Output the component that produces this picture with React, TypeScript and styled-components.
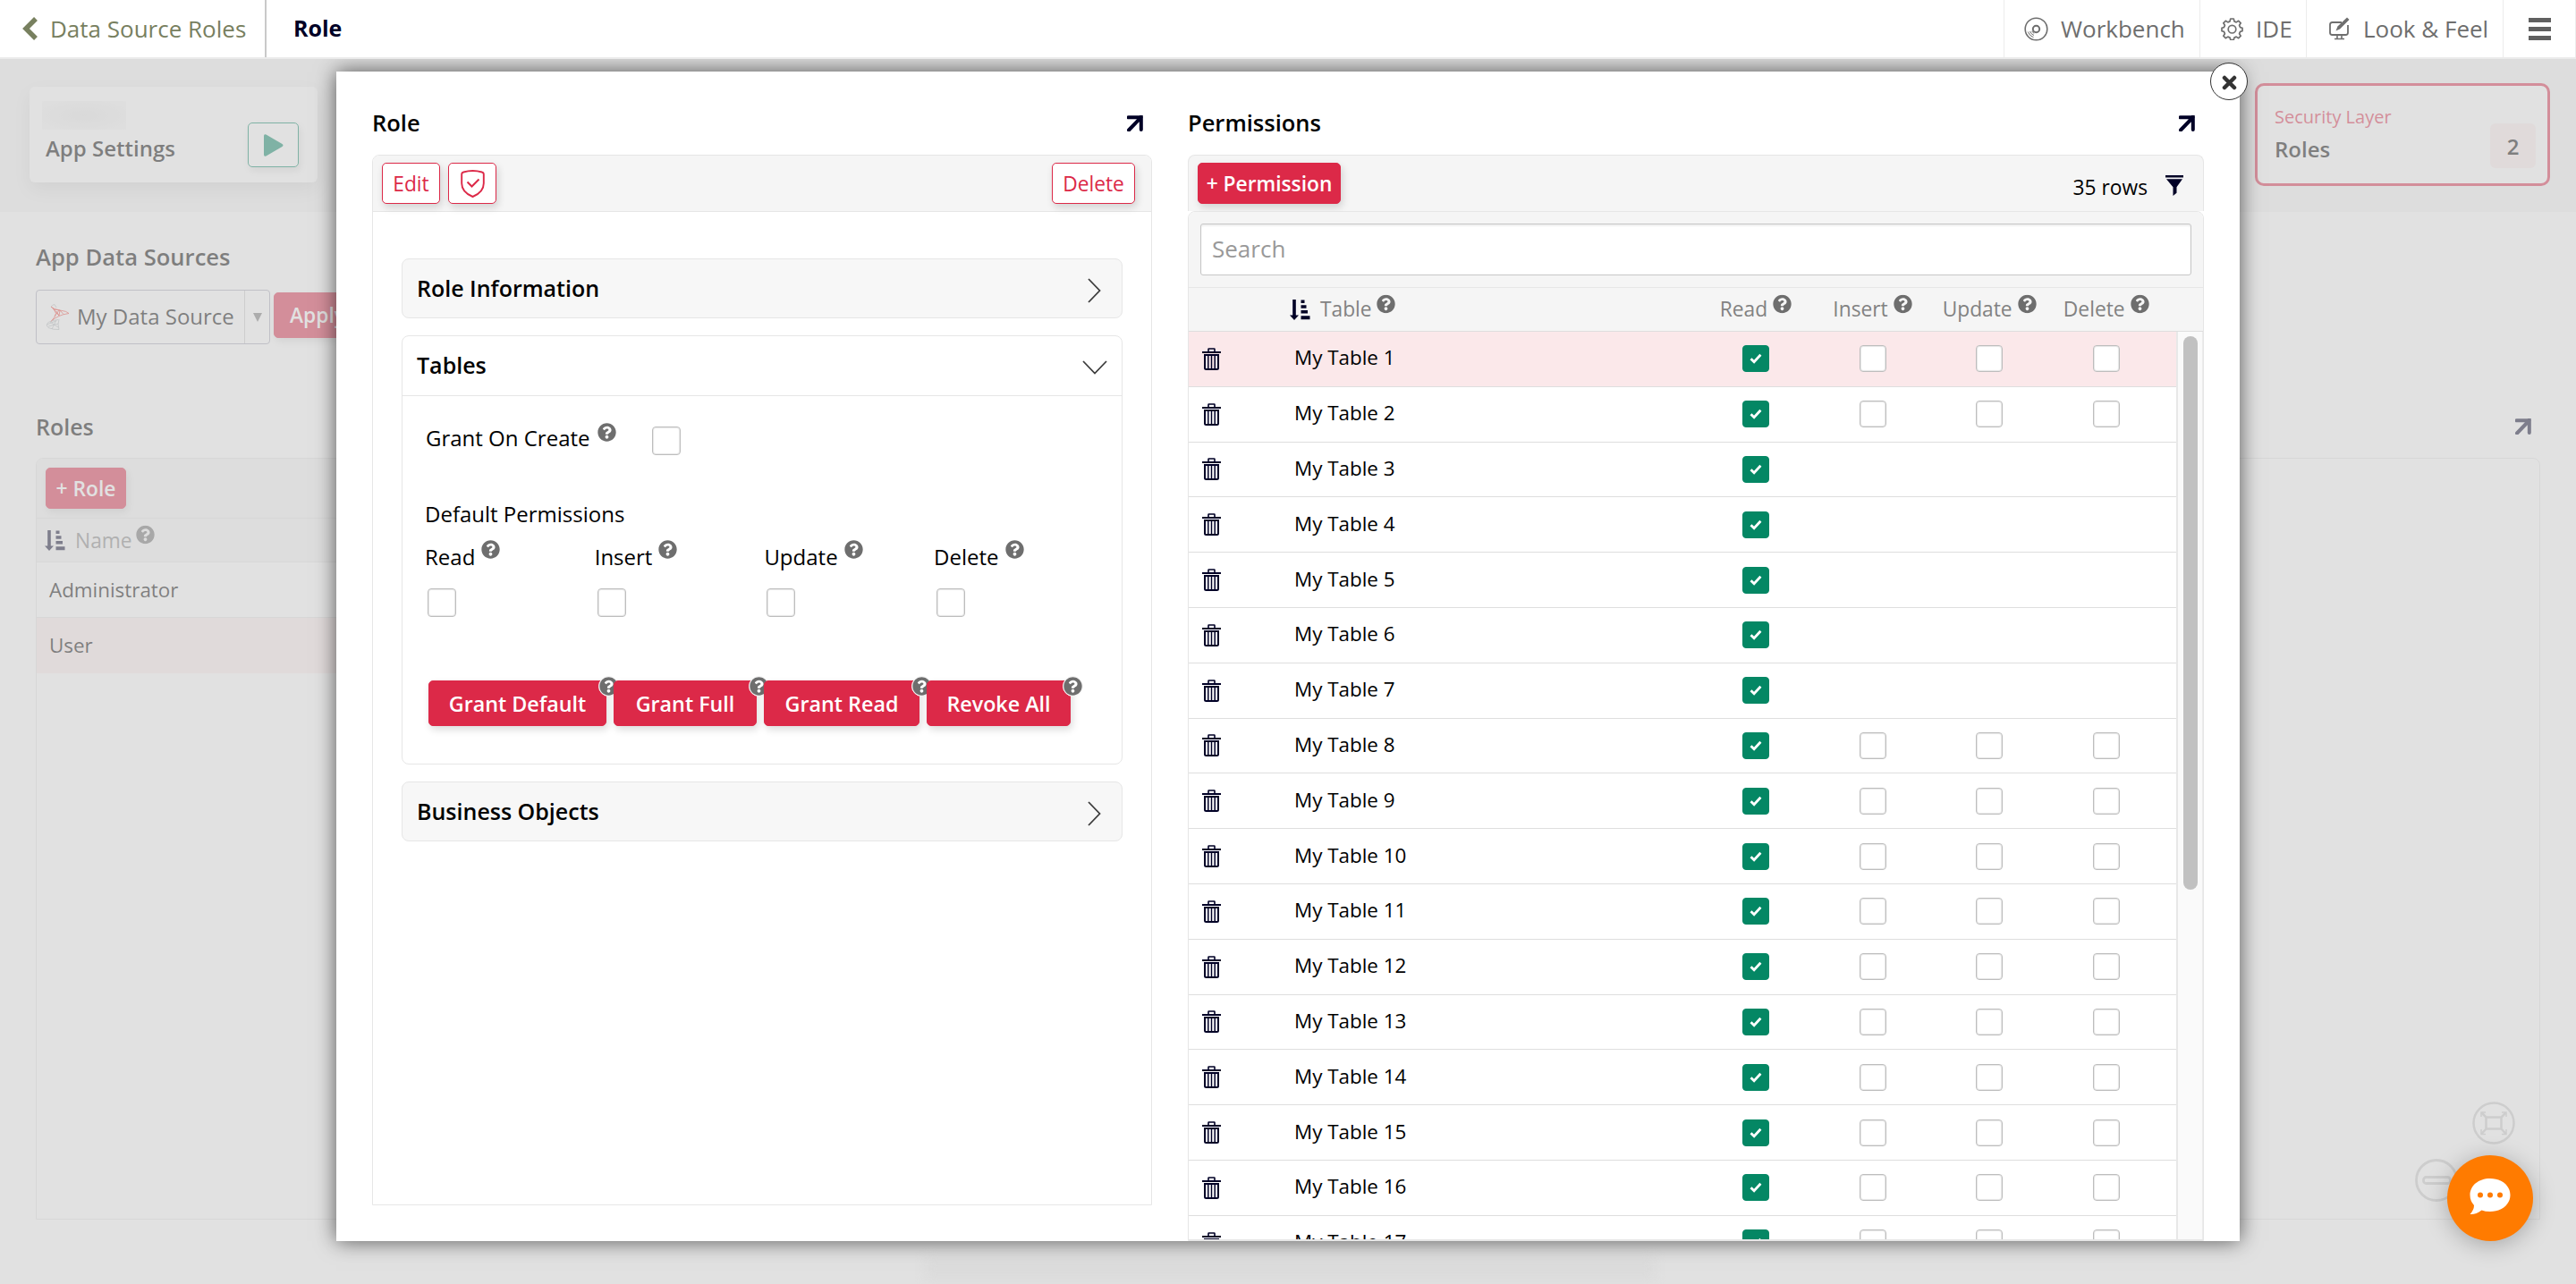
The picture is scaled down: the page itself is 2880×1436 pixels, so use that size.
import { ReactNode } from 'react';
import styled, { createGlobalStyle, css } from 'styled-components';
import { FaQuestionCircle } from 'react-icons/fa';

const colors = {
  primary: '#dc2948',
  green: '#048764',
  navy: '#000026',
  border: '#e6e6e6',
  toolbar: '#f5f5f5',
  selected: '#fbe8ea',
  muted: '#6e6e6e',
  columnLabel: '#828282',
};

const GlobalStyle = createGlobalStyle`
  * { box-sizing: border-box; }
  body {
    margin: 0;
    background: #fff;
    color: #000;
    font-family: 'Open Sans', 'Noto Sans', sans-serif;
    font-size: 24px;
  }
  svg { display: block; flex: none; }
`;

const Page = styled.div`
  position: relative;
  display: flex;
  flex-direction: column;
  width: 2880px;
  height: 1436px;
  overflow: hidden;
`;

/* Top bar */

const TopBar = styled.header`
  position: relative;
  z-index: 3;
  display: flex;
  flex: none;
  height: 66px;
  background: #fff;
  border-bottom: 2px solid #ebebeb;
  font-size: 26px;
`;

const BackLink = styled.a`
  display: flex;
  align-items: center;
  gap: 13px;
  width: 298px;
  padding-left: 24px;
  color: #78805f;
  border-right: 2px solid #c9c9c9;
`;

const PageTitle = styled.h1`
  flex: 1;
  margin: 0;
  padding-left: 30px;
  font-size: 25px;
  line-height: 63px;
  font-weight: 700;
  color: ${colors.navy};
`;

const NavItem = styled.a<{ $width: number; $gap?: number; $indent?: number }>`
  display: flex;
  align-items: center;
  gap: ${({ $gap = 12 }) => $gap}px;
  width: ${({ $width }) => $width}px;
  padding-left: ${({ $indent = 23 }) => $indent}px;
  color: ${colors.muted};
  border-left: 1px solid #ececec;
  white-space: nowrap;
`;

const MenuButton = styled.div`
  display: flex;
  flex-direction: column;
  justify-content: center;
  gap: 5px;
  width: 82px;
  padding-left: 28px;
  border-left: 1px solid #ececec;
  border-right: 1px solid #ececec;
`;

const MenuBar = styled.span`
  width: 25px;
  height: 5px;
  background: #606060;
`;

/* Shared controls */

const Button = styled.button<{ $outline?: boolean; $height?: number; $width?: number }>`
  display: flex;
  align-items: center;
  justify-content: center;
  flex: none;
  height: ${({ $height = 46 }) => $height}px;
  width: ${({ $width }) => ($width ? `${$width}px` : 'auto')};
  padding: 0;
  border: 1px solid ${colors.primary};
  border-radius: 5px;
  background: ${colors.primary};
  color: #fff;
  font: 600 22.75px 'Open Sans', 'Noto Sans', sans-serif;
  white-space: nowrap;
  box-shadow: 2px 4px 8px rgba(0, 0, 0, 0.14);
  ${({ $outline }) =>
    $outline &&
    css`
      background: #fff;
      color: ${colors.primary};
      font-weight: 500;
    `}
`;

const Box = styled.span<{ $size?: number; $checked?: boolean }>`
  display: flex;
  align-items: center;
  justify-content: center;
  flex: none;
  width: ${({ $size = 30 }) => $size}px;
  height: ${({ $size = 30 }) => $size}px;
  border: 1px solid ${({ $checked }) => ($checked ? colors.green : '#bdbdbd')};
  border-radius: 4px;
  background: ${({ $checked }) => ($checked ? colors.green : '#fff')};
  box-shadow: ${({ $checked }) => ($checked ? 'none' : 'inset 0 0 1px 1px #e6e6e6')};
`;

const HelpMark = styled.span<{ $lift: number }>`
  display: block;
  flex: none;
  transform: translateY(-${({ $lift }) => $lift}px);
  color: #6e6e6e;
`;

const Label = styled.span<{ $muted?: boolean; $small?: boolean; $gap?: number }>`
  display: flex;
  align-items: center;
  gap: ${({ $gap = 7 }) => $gap}px;
  line-height: 32px;
  font-size: ${({ $small }) => ($small ? 22.75 : 24)}px;
  color: ${({ $muted }) => ($muted ? colors.columnLabel : 'inherit')};
  white-space: nowrap;
`;

const Panel = styled.section<{ $height?: number }>`
  display: flex;
  flex-direction: column;
  height: ${({ $height }) => ($height ? `${$height}px` : 'auto')};
  border: 1px solid ${colors.border};
  border-radius: 8px 8px 0 0;
`;

const Toolbar = styled.div<{ $height?: number }>`
  display: flex;
  align-items: center;
  flex: none;
  gap: 9px;
  height: ${({ $height = 63 }) => $height}px;
  padding: 0 18px 0 10px;
  background: ${colors.toolbar};
  border-bottom: 1px solid ${colors.border};
  border-radius: 7px 7px 0 0;
`;

const Spacer = styled.span`
  flex: 1;
`;

/* Page behind the dialog */

const Background = styled.main`
  flex: 1;
  display: flex;
  flex-direction: column;
`;

const CardBand = styled.div`
  display: flex;
  justify-content: space-between;
  flex: none;
  height: 171px;
  padding: 27px 29px 0 33px;
  background: ${colors.toolbar};
`;

const Card = styled.div<{ $active?: boolean }>`
  display: flex;
  align-items: flex-end;
  justify-content: space-between;
  width: 322px;
  height: 107px;
  margin-top: 4px;
  padding: 0 21px 17px 18px;
  border-radius: 6px;
  background: #fff;
  box-shadow: 0 8px 20px rgba(0, 0, 0, 0.12);
  ${({ $active }) =>
    $active &&
    css`
      width: 330px;
      height: 115px;
      margin-top: 0;
      padding: 0 13px 17px 19px;
      border: 3px solid ${colors.primary};
      border-radius: 10px;
      box-shadow: none;
    `}
`;

const CardText = styled.div`
  display: flex;
  flex-direction: column;
  gap: 5px;
  margin-bottom: 5px;
`;

const CardKicker = styled.span`
  font-size: 20px;
  line-height: 30px;
  color: ${colors.primary};
`;

const BlurredName = styled.span`
  width: 94px;
  height: 32px;
  margin-left: -4px;
  background: radial-gradient(ellipse at center, #ebebeb, #f9f9f9);
`;

const CardName = styled.span`
  font-size: 24px;
  line-height: 32px;
  font-weight: 600;
`;

const PlayButton = styled.span`
  display: flex;
  align-items: center;
  justify-content: center;
  width: 57px;
  height: 50px;
  border: 1px solid ${colors.green};
  border-radius: 5px;
  box-shadow: 2px 4px 8px rgba(0, 0, 0, 0.14);
`;

const CountBadge = styled.span`
  display: flex;
  align-items: center;
  justify-content: center;
  width: 51px;
  height: 50px;
  border-radius: 6px;
  background: #fbecec;
  font-weight: 600;
`;

const Workspace = styled.div`
  display: flex;
  flex-direction: column;
  padding: 35px 40px 0;
`;

const SectionTitle = styled.h2<{ $size?: number }>`
  margin: 0;
  font-size: ${({ $size = 25 }) => $size}px;
  line-height: 32px;
  font-weight: 600;
`;

const SourceRow = styled.div`
  display: flex;
  align-items: center;
  gap: 4px;
  height: 61px;
  margin: 20px 0 76px;

  & > button {
    margin-bottom: 4px;
  }
`;

const Select = styled.div`
  display: flex;
  align-items: center;
  width: 262px;
  height: 61px;
  padding-left: 10px;
  border: 1px solid #aab;
  border-radius: 4px;
  background: #fff;
`;

const SelectText = styled.span`
  flex: 1;
  padding: 0 0 2px 8px;
  white-space: nowrap;
`;

const SelectArrow = styled.span`
  display: flex;
  align-items: center;
  justify-content: center;
  width: 28px;
  height: 100%;
  border-left: 1px solid #ccc;
`;

const RolesHead = styled.div`
  display: flex;
  align-items: center;
  justify-content: space-between;
  padding-right: 10px;
  margin-bottom: 19px;
`;

const RolesPanels = styled.div`
  display: grid;
  grid-template-columns: 1020px 1fr;
  gap: 40px;
  height: 852px;
`;

const RoleRow = styled.div<{ $selected?: boolean }>`
  height: 62px;
  padding-left: 14px;
  line-height: 61px;
  font-size: 22.4px;
  background: ${({ $selected }) => ($selected ? '#fbecec' : '#fff')};
  border-bottom: 1px solid ${({ $selected }) => ($selected ? 'transparent' : colors.border)};
`;

const Backdrop = styled.div`
  position: absolute;
  inset: 66px 0 0;
  z-index: 1;
  background: rgba(206, 206, 206, 0.61);
`;

const FooterSmudge = styled.div`
  position: absolute;
  left: 1035px;
  top: 1406px;
  width: 815px;
  height: 26px;
  background: #dbdbdb;
  filter: blur(6px);
  z-index: 1;
`;

const CanvasTool = styled.div<{ $left: number; $top: number }>`
  position: absolute;
  left: ${({ $left }) => $left}px;
  top: ${({ $top }) => $top}px;
  z-index: 1;
`;

const ChatButton = styled.div`
  position: absolute;
  right: 48px;
  bottom: 48px;
  z-index: 4;
  display: flex;
  align-items: center;
  justify-content: center;
  width: 96px;
  height: 96px;
  padding-bottom: 4px;
  border-radius: 50%;
  background: #ff7b00;
  box-shadow: 0 4px 26px rgba(0, 0, 0, 0.26);
`;

/* Dialog */

const Modal = styled.div`
  position: absolute;
  left: 376px;
  top: 80px;
  z-index: 2;
  display: grid;
  grid-template-columns: 872px 1136px;
  gap: 40px;
  width: 2128px;
  height: 1308px;
  padding: 0 40px;
  background: #fff;
  box-shadow: 0 0 22px rgba(0, 0, 0, 0.62);
`;

const CloseButton = styled.button`
  position: absolute;
  right: -9px;
  top: -10px;
  display: flex;
  align-items: center;
  justify-content: center;
  width: 42px;
  height: 42px;
  padding: 2px 0 0;
  border: 1.5px solid #333;
  border-radius: 50%;
  background: #fff;
`;

const Column = styled.div`
  display: flex;
  flex-direction: column;
  height: 1308px;
  overflow: hidden;
`;

const ColumnHead = styled.div`
  display: flex;
  align-items: center;
  justify-content: space-between;
  flex: none;
  height: 93px;
  padding: 21px 10px 0 0;

  & > svg {
    margin-top: 2px;
  }
`;

const Accordions = styled.div`
  display: flex;
  flex-direction: column;
  gap: 19px;
  padding: 52px 32px 0;
`;

const Accordion = styled.div<{ $open?: boolean }>`
  border: 1px solid ${colors.border};
  border-radius: 8px;
  background: ${({ $open }) => ($open ? '#fff' : '#f7f7f7')};
  height: ${({ $open }) => ($open ? '480px' : '67px')};
`;

const AccordionHead = styled.div<{ $open?: boolean }>`
  display: flex;
  align-items: center;
  justify-content: space-between;
  height: ${({ $open }) => ($open ? 67 : 65)}px;
  padding: 0 ${({ $open }) => ($open ? 16 : 23)}px 2px 16px;
  border-bottom: ${({ $open }) => ($open ? `1px solid ${colors.border}` : 'none')};

  & > svg {
    margin-top: 6px;
  }
`;

const AccordionBody = styled.div`
  padding: 34px 24px 0 25px;
`;

const GrantRow = styled.div`
  display: flex;
  align-items: flex-start;
  gap: 40px;
  height: 32px;
  margin-bottom: 50px;

  & > ${Label} {
    margin: -3px 0 0 1px;
  }
`;

const DefaultGrid = styled.div`
  display: grid;
  grid-template-columns: repeat(4, 189.7px);
  row-gap: 19px;
  margin: 16px 0 71px;

  & > ${Box} {
    margin-left: 3px;
  }
`;

const GrantButtons = styled.div`
  display: flex;
  gap: 8px;
  padding-left: 4px;
`;

const GrantButton = styled(Button)`
  position: relative;
  font-size: 23.3px;
`;

const CornerHelp = styled.span`
  position: absolute;
  right: -15px;
  top: -6px;
  border: 1px solid #f3f3f3;
  border-radius: 50%;
  background: #fff;
  color: #6e6e6e;
`;

const RowCount = styled.span`
  padding-top: 8px;
  margin-right: 8px;
  font-size: 22.75px;
`;

const SearchBar = styled.div`
  flex: none;
  height: 85px;
  padding: 13px;
  background: ${colors.toolbar};
  border-bottom: 1px solid ${colors.border};
  border-radius: 7px 7px 0 0;
`;

const SearchInput = styled.input`
  width: 100%;
  height: 58px;
  padding: 0 12px 2px;
  border: 1px solid #c6c6c6;
  border-radius: 3px;
  box-shadow: inset 0 2px 2px #efefef;
  font: 26px 'Open Sans', 'Noto Sans', sans-serif;
  &::placeholder { color: #999; opacity: 1; }
`;

const rowColumns = css`
  display: grid;
  grid-template-columns: 116px 1fr repeat(4, 130.6px);
  align-items: center;
`;

const GridHead = styled.div`
  ${rowColumns}
  flex: none;
  height: 49px;
  padding-right: 43px;
  background: ${colors.toolbar};
  border-bottom: 1px solid #dedede;
`;

const GridBody = styled.div`
  display: flex;
  flex: 1;
  overflow: hidden;
  border-bottom: 1px solid ${colors.border};
`;

const Rows = styled.div`
  width: 1104px;
`;

const Row = styled.div<{ $selected?: boolean }>`
  ${rowColumns}
  height: 61.8px;
  padding-right: 13px;
  background: ${({ $selected }) => ($selected ? colors.selected : '#fff')};
  border-bottom: 1px solid #dedede;
`;

const Cell = styled.span<{ $center?: boolean }>`
  display: flex;
  align-items: center;
  gap: 11px;
  justify-content: ${({ $center }) => ($center ? 'center' : 'flex-start')};
`;

const TrashCell = styled(Cell)`
  padding-left: 15px;
`;

const SortCell = styled(Cell)`
  margin-left: -3px;
`;

const TableName = styled.span`
  padding: 0 0 3px 2px;
  font-size: 22.4px;
`;

const ScrollTrack = styled.div`
  width: 30px;
  padding: 5px 0 0 6px;
  background: #fafafa;
  border-left: 2px solid #e8e8e8;
  border-right: 1px solid #ececec;
`;

const ScrollThumb = styled.div`
  width: 16px;
  height: 619px;
  border-radius: 8px;
  background: #c1c1c1;
`;

const TableToolbar = styled(Toolbar)`
  gap: 12px;
  border: 1px solid ${colors.border};
  border-bottom: none;
  border-radius: 8px 8px 0 0;
  padding-right: 22px;

  & > svg {
    margin-top: 4px;
  }
`;

const TablePanel = styled(Panel)`
  flex: 1;
  min-height: 0;
`;

const NameHead = styled(Toolbar)`
  gap: 11px;
  padding: 1px 0 0 9px;
  border-radius: 0;
`;

/* Icons */

const ExpandIcon = () => (
  <svg width="18" height="18" viewBox="0 0 18 18" fill="none" stroke={colors.navy} strokeWidth="4">
    <path d="M1.5 2.2H16M15.8 1v15M15 3 2 16.5" strokeLinecap="round" />
    <path d="M10 2.5h6v6z" fill={colors.navy} stroke="none" />
  </svg>
);

const SortIcon = () => (
  <svg width="23" height="23" viewBox="0 0 23 23" fill={colors.navy}>
    <path d="M3.200 0h3.600v17.500h3.200l-5 5.500-5-5.500h3.200zM12.500 .5h4v3.500h-4zM12.500 6.200h6v3.600h-6zM12.500 12h7.500v3.600h-7.500zM12.500 18.200h10v4h-10z" />
  </svg>
);

const TrashIcon = () => (
  <svg width="21" height="25" viewBox="0 0 21 25" fill="none" stroke={colors.navy}>
    <path d="M0 5h21" strokeWidth="2" />
    <path d="M7 4V1.500q0-.5.500-.5h6q.5 0 .5.500V4" strokeWidth="1.600" />
    <path d="M3 8h15v14.500q0 1.500-1.500 1.500h-12Q3 24 3 22.500z" strokeWidth="2" />
    <path d="M6.800 9v14M10.500 9v14M14.200 9v14" strokeWidth="1.500" />
  </svg>
);

const FilterIcon = () => (
  <svg width="20" height="23" viewBox="0 0 20 23" fill={colors.navy}>
    <path d="M0 0h20v2.400H0zM1 4.200h18l-6.500 9v6.500L8.500 23v-9.800z" />
  </svg>
);

const ShieldIcon = () => (
  <svg width="27" height="31" viewBox="0 0 27 31" fill="none" stroke={colors.primary} strokeWidth="1.900">
    <path
      d="M1.200 5Q1.200 3 3.200 2.500 13.500-.5 23.800 2.500q2 .5 2 2.500v10q0 10-12.300 15Q1.200 25 1.200 15z"
      strokeLinejoin="round"
    />
    <path d="m7.500 13.500 5 5 8-8" strokeWidth="2" />
  </svg>
);

const CheckIcon = () => (
  <svg width="14" height="12" viewBox="0 0 14 12" fill="none" stroke="#fff" strokeWidth="2.800">
    <path d="m1.500 6.200 3.600 3.600L12.400 1.800" />
  </svg>
);

const Chevron = ({ down }: { down?: boolean }) =>
  down ? (
    <svg width="28" height="16" viewBox="0 0 28 16" fill="none" stroke="#3c3c3c" strokeWidth="1.800">
      <path d="m1 1 13 13.500L27 1" />
    </svg>
  ) : (
    <svg width="15" height="28" viewBox="0 0 15 28" fill="none" stroke="#3c3c3c" strokeWidth="1.800">
      <path d="m1 1 12.500 13L1 27" />
    </svg>
  );

const BackIcon = () => (
  <svg width="19" height="26" viewBox="0 0 19 26" fill="none" stroke="#78805f" strokeWidth="5.500">
    <path d="M16 2 5 13l11 11" />
  </svg>
);

const DiscIcon = () => (
  <svg width="27" height="27" viewBox="0 0 27 27" fill="none" stroke={colors.muted} strokeWidth="1.600">
    <circle cx="13.500" cy="13.500" r="12.300" />
    <circle cx="13.500" cy="13.500" r="3.700" strokeWidth="2" />
    <path
      d="M4.300 16.500a9.700 9.700 0 0 0 6.200 6.200M6.500 16a7.400 7.400 0 0 0 4.500 4.500M8.700 15.800a5.300 5.300 0 0 0 2.500 2.500"
      strokeWidth="1"
    />
  </svg>
);

const GearIcon = () => (
  <svg width="25" height="25" viewBox="0 0 25 25" fill="none" stroke={colors.muted} strokeWidth="1.700">
    <path
      d="M10.700 1h3.600l.6 2.900 2.300 1 2.500-1.600 2.500 2.500-1.600 2.500 1 2.300 2.400.6v3.600l-2.400.6-1 2.300 1.600 2.500-2.500 2.500-2.500-1.600-2.300 1-.6 2.400h-3.600l-.6-2.400-2.300-1-2.500 1.600-2.500-2.500 1.600-2.500-1-2.300L1 14.800v-3.600l2.400-.6 1-2.300-1.600-2.500 2.500-2.500 2.500 1.600 2.300-1z"
      strokeLinejoin="round"
    />
    <circle cx="12.500" cy="12.700" r="4.300" />
  </svg>
);

const MonitorPenIcon = () => (
  <svg width="23" height="26" viewBox="0 0 23 26" fill="none" stroke={colors.muted} strokeWidth="1.800">
    <path d="M14 6H3.500Q1 6 1 8.500v9Q1 20 3.500 20h15q2.500 0 2.500-2.500V9" />
    <path d="M9 20.500V24M14 20.500V24M6 24.500h11" strokeWidth="1.600" />
    <path d="m7.500 15.500 2-5L20 .5 22.500 3 12 13.500z" fill={colors.muted} stroke="none" />
  </svg>
);

const ServerLogo = () => (
  <svg width="27" height="29" viewBox="0 0 27 29" fill="none" strokeWidth=".8">
    <path
      d="M6 3q3 3 10 4 8 1 10 3.500-7 1-11 3-5 2-9 6 5-5 5.500-9Q11 6 6 3zM8 5l7 8 1-6M12 8l3 5M9 6l7 1M16 7l4 4.500M10 14l5-7"
      stroke="#f0352b"
    />
    <path d="M6 3q1-2 4-2.500M10 .5 12 4" stroke="#b5b5b5" />
    <path
      d="M15 17q-2 6 0 11.500Q9 29 3 26.500 0 24 2 21.500 4 19 14 17.500M1.500 23l10-4M5 20l9 6M12 18l-5 10M3 25l11-3"
      stroke="#adb5b9"
    />
  </svg>
);

const FitIcon = () => (
  <svg width="48" height="48" viewBox="0 0 48 48" fill="none" stroke="#cdcdcd" strokeWidth="2.500">
    <circle cx="24" cy="24" r="22.500" />
    <path d="M15.500 17.500h17v13h-17zM15.500 17.500l-5-5M32.500 17.500l5-5M15.500 30.500l-5 5.500M32.500 30.500l5 5.500" />
    <path d="M10 17v-5h5M38 17v-5h-5M10 31v5.500h5M38 31v5.500h-5" strokeWidth="1.500" />
  </svg>
);

const MinusIcon = () => (
  <svg width="48" height="48" viewBox="0 0 48 48" fill="none" stroke="#cdcdcd" strokeWidth="2.800">
    <circle cx="24" cy="24" r="22.500" />
    <rect x="9.500" y="20.500" width="30" height="7" rx="3" />
  </svg>
);

const ChatIcon = () => (
  <svg width="46" height="41" viewBox="0 0 46 41">
    <path
      d="M23 0C36 0 45.500 8 45.500 18.500S36 37 23 37q-5.500 0-9.500-1.500Q7 40.500 .5 40 5 35 5 30 .5 25 .5 18.500C.5 8 10 0 23 0z"
      fill="#fff"
    />
    <g fill="#ff7b00">
      <circle cx="12" cy="18.500" r="3" />
      <circle cx="23" cy="18.500" r="3" />
      <circle cx="34" cy="18.500" r="3" />
    </g>
  </svg>
);

/* Composed parts */

const Help = ({ lift = 6.5 }: { lift?: number }) => (
  <HelpMark $lift={lift}>
    <FaQuestionCircle size={21} />
  </HelpMark>
);

function ColumnTitle({ children }: { children: ReactNode }) {
  return (
    <ColumnHead>
      <SectionTitle $size={25.5}>{children}</SectionTitle>
      <ExpandIcon />
    </ColumnHead>
  );
}

function Checkbox({ checked, size }: { checked?: boolean; size?: number }) {
  return (
    <Box $checked={checked} $size={size}>
      {checked && <CheckIcon />}
    </Box>
  );
}

const permissions = ['Read', 'Insert', 'Update', 'Delete'];

const grantActions = [
  { label: 'Grant Default', width: 199 },
  { label: 'Grant Full', width: 160 },
  { label: 'Grant Read', width: 174 },
  { label: 'Revoke All', width: 161 },
];

const tables = Array.from({ length: 17 }, (_, i) => ({
  name: `My Table ${i + 1}`,
  readOnly: i >= 2 && i <= 6,
}));

function RolePanel() {
  return (
    <Column>
      <ColumnTitle>Role</ColumnTitle>
      <Panel $height={1175}>
        <Toolbar>
          <Button $outline $width={65}>
            Edit
          </Button>
          <Button $outline $width={54}>
            <ShieldIcon />
          </Button>
          <Spacer />
          <Button $outline $width={93}>
            Delete
          </Button>
        </Toolbar>
        <Accordions>
          <Accordion>
            <AccordionHead>
              <SectionTitle>Role Information</SectionTitle>
              <Chevron />
            </AccordionHead>
          </Accordion>
          <Accordion $open>
            <AccordionHead $open>
              <SectionTitle>Tables</SectionTitle>
              <Chevron down />
            </AccordionHead>
            <AccordionBody>
              <GrantRow>
                <Label $gap={8}>
                  Grant On Create
                  <Help lift={7} />
                </Label>
                <Checkbox size={32} />
              </GrantRow>
              <Label>Default Permissions</Label>
              <DefaultGrid>
                {permissions.map((name) => (
                  <Label key={name}>
                    {name}
                    <Help lift={9} />
                  </Label>
                ))}
                {permissions.map((name) => (
                  <Checkbox key={name} size={32} />
                ))}
              </DefaultGrid>
              <GrantButtons>
                {grantActions.map(({ label, width }) => (
                  <GrantButton key={label} $height={51} $width={width}>
                    {label}
                    <CornerHelp>
                      <FaQuestionCircle size={21} />
                    </CornerHelp>
                  </GrantButton>
                ))}
              </GrantButtons>
            </AccordionBody>
          </Accordion>
          <Accordion>
            <AccordionHead>
              <SectionTitle>Business Objects</SectionTitle>
              <Chevron />
            </AccordionHead>
          </Accordion>
        </Accordions>
      </Panel>
    </Column>
  );
}

function PermissionsPanel() {
  return (
    <Column>
      <ColumnTitle>Permissions</ColumnTitle>
      <TableToolbar>
        <Button $width={160}>+ Permission</Button>
        <Spacer />
        <RowCount>35 rows</RowCount>
        <FilterIcon />
      </TableToolbar>
      <TablePanel>
        <SearchBar>
          <SearchInput placeholder="Search" />
        </SearchBar>
        <GridHead>
          <span />
          <SortCell>
            <SortIcon />
            <Label $muted $small $gap={5}>
              Table
              <Help />
            </Label>
          </SortCell>
          {permissions.map((name) => (
            <Cell key={name} $center>
              <Label $muted $small $gap={6}>
                {name}
                <Help />
              </Label>
            </Cell>
          ))}
        </GridHead>
        <GridBody>
          <Rows>
            {tables.map(({ name, readOnly }, i) => (
              <Row key={name} $selected={i === 0}>
                <TrashCell>
                  <TrashIcon />
                </TrashCell>
                <TableName>{name}</TableName>
                <Cell $center>
                  <Checkbox checked />
                </Cell>
                {!readOnly &&
                  permissions.slice(1).map((permission) => (
                    <Cell key={permission} $center>
                      <Checkbox />
                    </Cell>
                  ))}
              </Row>
            ))}
          </Rows>
          <ScrollTrack>
            <ScrollThumb />
          </ScrollTrack>
        </GridBody>
      </TablePanel>
    </Column>
  );
}

function RolesPage() {
  return (
    <Background>
      <CardBand>
        <Card>
          <CardText>
            <BlurredName />
            <CardName>App Settings</CardName>
          </CardText>
          <PlayButton>
            <svg width="22" height="25" viewBox="0 0 22 25" fill={colors.green}>
              <path d="M0 2Q0-.5 2.500.5L20.500 11q2 1.500 0 3L2.500 24.500Q0 25.500 0 23z" />
            </svg>
          </PlayButton>
        </Card>
        <Card $active>
          <CardText>
            <CardKicker>Security Layer</CardKicker>
            <CardName>Roles</CardName>
          </CardText>
          <CountBadge>2</CountBadge>
        </Card>
      </CardBand>
      <Workspace>
        <SectionTitle $size={25.6}>App Data Sources</SectionTitle>
        <SourceRow>
          <Select>
            <ServerLogo />
            <SelectText>My Data Source</SelectText>
            <SelectArrow>
              <svg width="10" height="10" viewBox="0 0 10 10" fill="#777">
                <path d="M0 0h10L5 10z" />
              </svg>
            </SelectArrow>
          </Select>
          <Button $height={51} $width={98}>
            Apply
          </Button>
        </SourceRow>
        <RolesHead>
          <SectionTitle>Roles</SectionTitle>
          <ExpandIcon />
        </RolesHead>
        <RolesPanels>
          <Panel>
            <Toolbar $height={67}>
              <Button $width={90}>+ Role</Button>
            </Toolbar>
            <NameHead $height={49}>
              <SortIcon />
              <Label $muted $small $gap={4}>
                Name
                <Help />
              </Label>
            </NameHead>
            <RoleRow>Administrator</RoleRow>
            <RoleRow $selected>User</RoleRow>
          </Panel>
          <Panel />
        </RolesPanels>
      </Workspace>
    </Background>
  );
}

export default function App() {
  return (
    <Page>
      <GlobalStyle />
      <TopBar>
        <BackLink>
          <BackIcon />
          Data Source Roles
        </BackLink>
        <PageTitle>Role</PageTitle>
        <NavItem $width={219} $gap={14} $indent={22}>
          <DiscIcon />
          Workbench
        </NavItem>
        <NavItem $width={119} $gap={14}>
          <GearIcon />
          IDE
        </NavItem>
        <NavItem $width={220} $gap={15} $indent={25}>
          <MonitorPenIcon />
          Look &amp; Feel
        </NavItem>
        <MenuButton>
          <MenuBar />
          <MenuBar />
          <MenuBar />
        </MenuButton>
      </TopBar>
      <RolesPage />
      <Backdrop />
      <FooterSmudge />
      <CanvasTool $left={2764} $top={1232}>
        <FitIcon />
      </CanvasTool>
      <CanvasTool $left={2700} $top={1296}>
        <MinusIcon />
      </CanvasTool>
      <Modal>
        <RolePanel />
        <PermissionsPanel />
        <CloseButton>
          <svg width="17" height="17" viewBox="0 0 17 17" stroke="#333" strokeWidth="4.500" strokeLinecap="round">
            <path d="m3 3 11 11M14 3 3 14" />
          </svg>
        </CloseButton>
      </Modal>
      <ChatButton>
        <ChatIcon />
      </ChatButton>
    </Page>
  );
}
